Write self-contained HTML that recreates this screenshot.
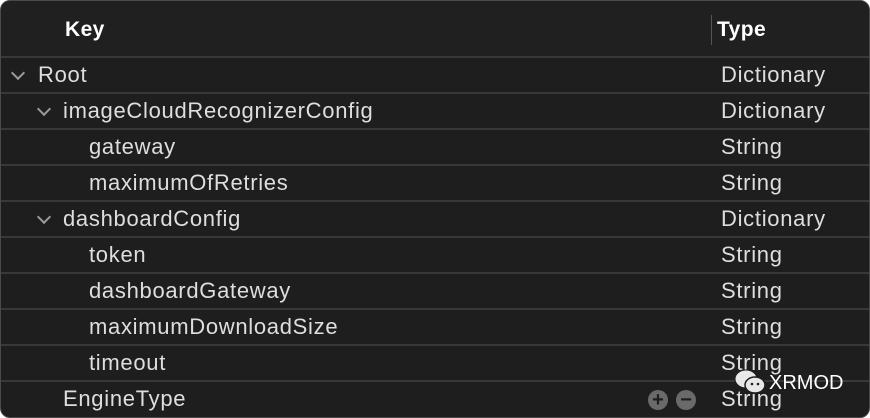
<!DOCTYPE html>
<html><head><style>
html,body{margin:0;padding:0;background:#fff;}
body{width:870px;height:418px;overflow:hidden;font-family:"Liberation Sans",sans-serif;}
.win{position:absolute;left:0;top:0;width:868px;height:416px;background:#1e1e1e;border:1px solid #4a4a4a;border-radius:10px;overflow:hidden;}
.hdr{position:absolute;left:0;top:0;width:100%;height:55px;background:#202020;border-bottom:2px solid #383838;}
.hdr .k{position:absolute;left:64px;top:17px;font-size:21px;font-weight:bold;color:#fff;letter-spacing:0.4px;}
.hdr .t{position:absolute;left:716px;top:17px;font-size:21px;font-weight:bold;color:#fff;letter-spacing:0.4px;}
.hdr .d{position:absolute;left:710px;top:14px;width:1px;height:30px;background:#555;}
.row{position:absolute;left:0;width:100%;height:34px;border-bottom:2px solid #383838;color:#dedede;font-size:22px;letter-spacing:0.7px;}
.row span{position:absolute;top:4px;}
.row .ty{left:720px;}
.chev{position:absolute;top:10px;width:8px;height:8px;border-right:2px solid #9a9a9a;border-bottom:2px solid #9a9a9a;transform:rotate(45deg);}
.btn{position:absolute;width:20px;height:20px;border-radius:50%;background:#6a6a6a;color:#1e1e1e;font-weight:bold;font-size:20px;line-height:20px;text-align:center;letter-spacing:0;}
</style></head><body>
<div class="win">
<div class="hdr"><span class="k">Key</span><div class="d"></div><span class="t">Type</span></div>
<div class="row" style="top:57px"><div class="chev" style="left:12px"></div><span style="left:37px">Root</span><span class="ty">Dictionary</span></div>
<div class="row" style="top:93px"><div class="chev" style="left:38px"></div><span style="left:62px">imageCloudRecognizerConfig</span><span class="ty">Dictionary</span></div>
<div class="row" style="top:129px"><span style="left:88px">gateway</span><span class="ty">String</span></div>
<div class="row" style="top:165px"><span style="left:88px">maximumOfRetries</span><span class="ty">String</span></div>
<div class="row" style="top:201px"><div class="chev" style="left:38px"></div><span style="left:62px">dashboardConfig</span><span class="ty">Dictionary</span></div>
<div class="row" style="top:237px"><span style="left:88px">token</span><span class="ty">String</span></div>
<div class="row" style="top:273px"><span style="left:88px">dashboardGateway</span><span class="ty">String</span></div>
<div class="row" style="top:309px"><span style="left:88px">maximumDownloadSize</span><span class="ty">String</span></div>
<div class="row" style="top:345px"><span style="left:88px">timeout</span><span class="ty">String</span></div>
<div class="row" style="top:381px;border-bottom:none"><span style="left:62px">EngineType</span><span class="ty">String</span>
<div class="btn" style="left:647px;top:8px">+</div><div class="btn" style="left:675px;top:8px">−</div></div>
<svg style="position:absolute;left:733px;top:367px" width="32" height="30" viewBox="0 0 32 30">
<ellipse cx="12" cy="11" rx="11" ry="9" fill="#e8e8e8" stroke="#1e1e1e" stroke-width="1"/>
<ellipse cx="21" cy="17" rx="10" ry="8" fill="#e8e8e8" stroke="#1e1e1e" stroke-width="1.5"/>
<circle cx="18" cy="16" r="1.3" fill="#1e1e1e"/><circle cx="24" cy="16" r="1.3" fill="#1e1e1e"/>
</svg>
<span style="position:absolute;left:768px;top:371px;font-size:20px;color:#fff">XRMOD</span>
</div>
</body></html>
